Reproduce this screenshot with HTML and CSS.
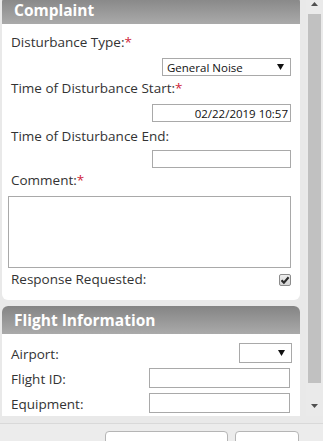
FILE: index.html
```html
<!DOCTYPE html>
<html>
<head>
<meta charset="utf-8">
<link rel="stylesheet" href="styles.css">
</head>
<body>
<div class="app">
  <div class="viewport">
    <div class="content">
      <section class="panel panel-complaint">
        <div class="panel-head">Complaint</div>
        <div class="panel-body">
          <div class="label l1">Disturbance Type:<span class="req">*</span></div>
          <div class="field-right f1">
            <div class="select sel-type">
              <span class="sel-text">General Noise</span>
              <svg class="sel-arrow" width="7" height="6" viewBox="0 0 7 6"><polygon points="0,0 7,0 3.5,6" fill="#111"/></svg>
            </div>
          </div>
          <div class="label l2">Time of Disturbance Start:<span class="req">*</span></div>
          <div class="field-right f2">
            <input class="text date" type="text" value="02/22/2019 10:57">
          </div>
          <div class="label l3">Time of Disturbance End:</div>
          <div class="field-right f3">
            <input class="text date" type="text" value="">
          </div>
          <div class="label l4">Comment:<span class="req">*</span></div>
          <textarea class="comment"></textarea>
          <div class="row-check">
            <div class="label">Response Requested:</div>
            <span class="checkbox">
              <svg width="10" height="10" viewBox="0 0 10 10"><path d="M1.5 5.2 L3.9 7.6 L8.6 2.2" fill="none" stroke="#2b2b2b" stroke-width="2.1"/></svg>
            </span>
          </div>
        </div>
      </section>
      <section class="panel panel-flight">
        <div class="panel-head">Flight Information</div>
        <div class="panel-body">
          <div class="row">
            <div class="label">Airport:</div>
            <div class="select sel-airport">
              <span class="sel-text"></span>
              <svg class="sel-arrow" width="7" height="6" viewBox="0 0 7 6"><polygon points="0,0 7,0 3.5,6" fill="#111"/></svg>
            </div>
          </div>
          <div class="row">
            <div class="label">Flight ID:</div>
            <input class="text wide" type="text" value="">
          </div>
          <div class="row">
            <div class="label">Equipment:</div>
            <input class="text wide" type="text" value="">
          </div>
        </div>
      </section>
    </div>
    <div class="scrollbar">
      <div class="sb-btn">
        <svg width="7" height="4" viewBox="0 0 7 4"><polygon points="0,4 7,4 3.5,0" fill="#505050"/></svg>
      </div>
      <div class="sb-track"><div class="sb-thumb"></div></div>
      <div class="sb-btn">
        <svg width="7" height="4" viewBox="0 0 7 4"><polygon points="0,0 7,0 3.5,4" fill="#505050"/></svg>
      </div>
    </div>
  </div>
  <div class="footer">
    <div class="btn btn-submit"></div>
    <div class="btn btn-cancel"></div>
  </div>
</div>
</body>
</html>
```
FILE: styles.css
```css
* { box-sizing: border-box; }
html, body { margin: 0; padding: 0; }
body {
  width: 323px;
  height: 441px;
  overflow: hidden;
  background: #e9e9e9;
  font-family: "Open Sans", "Noto Sans", sans-serif;
  color: #333;
}
.app { display: flex; flex-direction: column; height: 441px; }
.viewport { display: flex; height: 416px; flex-shrink: 0; overflow: hidden; }
.content {
  width: 306px;
  overflow: hidden;
  display: flex;
  flex-direction: column;
  margin-top: -4px;
  padding-left: 2px;
}
.panel {
  width: 298px;
  background: #fff;
  border-radius: 6px;
  overflow: hidden;
  flex-shrink: 0;
}
.panel-complaint { height: 304px; margin-bottom: 6px; }
.panel-head {
  height: 28px;
  line-height: 28px;
  padding-left: 12px;
  color: #fff;
  font-weight: bold;
  font-size: 15.5px;
  background: linear-gradient(#848484, #aaaaaa);
}
.panel-body { display: flex; flex-direction: column; padding: 0 9px 0 6px; }
.panel-complaint .panel-body { padding-top: 9px; }
.label {
  font-size: 13.5px;
  line-height: 18px;
  height: 18px;
  padding-left: 3px;
  white-space: nowrap;
}
.req { color: #d0243a; }
.field-right { display: flex; justify-content: flex-end; }
.f1 { margin-top: 7px; }
.l2 { margin-top: 3px; }
.f2 { margin-top: 7px; }
.l3 { margin-top: 5px; }
.f3 { margin-top: 5px; }
.l4 { margin-top: 3px; }
.select {
  display: flex;
  align-items: center;
  justify-content: space-between;
  border: 1px solid #a9a9a9;
  background: #fff;
  padding: 0 6px 0 4px;
  font-size: 11.5px;
  color: #111;
}
.sel-type { width: 129px; height: 18px; }
.sel-text { white-space: nowrap; }
.text {
  border: 1px solid #a9a9a9;
  outline: none;
  margin: 0;
  font-family: "Open Sans", "Noto Sans", sans-serif;
  font-size: 11.5px;
  color: #111;
  background: #fff;
}
.date { width: 139px; height: 18px; text-align: right; padding: 0 2px 0 2px; }
.comment {
  display: block;
  margin: 7px 0 0 0;
  width: 283px;
  height: 72px;
  border: 1px solid #a9a9a9;
  resize: none;
  outline: none;
}
.row-check {
  display: flex;
  justify-content: space-between;
  align-items: center;
  margin-top: 1px;
  height: 20px;
}
.checkbox {
  width: 12px;
  height: 12px;
  border: 1px solid #8c8c8c;
  border-radius: 2px;
  background: linear-gradient(#eeeeee, #d4d4d4);
  display: flex;
  align-items: center;
  justify-content: center;
  margin-top: 1px;
}
.checkbox svg { display: block; }
.panel-flight { height: 140px; border-bottom-left-radius: 0; border-bottom-right-radius: 0; }
.panel-flight .panel-body { padding-top: 9px; padding-right: 8px; }
.row {
  display: flex;
  align-items: center;
  justify-content: space-between;
  height: 20px;
  margin-bottom: 5px;
}
.row .label { padding-top: 2px; height: 20px; }
.sel-airport { width: 53px; height: 20px; }
.wide { width: 141px; height: 20px; margin-right: 2px; }
.scrollbar {
  width: 17px;
  display: flex;
  flex-direction: column;
  background: #eaeaea;
}
.sb-btn {
  height: 12px;
  display: flex;
  align-items: center;
  justify-content: center;
}
.sb-btn svg { display: block; }
.sb-btn:first-child { align-items: flex-start; padding-top: 2px; height: 14px; }
.sb-btn:last-child { height: 33px; align-items: flex-start; padding-top: 21px; }
.sb-track { flex: 1; padding: 0 2px 0 2px; display: flex; }
.sb-thumb { flex: 1; background: #c1c1c1; }
.footer {
  flex: 1;
  display: flex;
  justify-content: flex-end;
  gap: 7px;
  padding: 7px 24px 0 0;
  margin-top: 7px;
  border-top: 1px solid #d9d9d9;
  background: #ececec;
}
.btn {
  height: 22px;
  flex-shrink: 0;
  background: #fff;
  border: 1px solid #b5b5b5;
  border-radius: 4px;
}
.btn-submit { width: 123px; }
.btn-cancel { width: 64px; }
```
